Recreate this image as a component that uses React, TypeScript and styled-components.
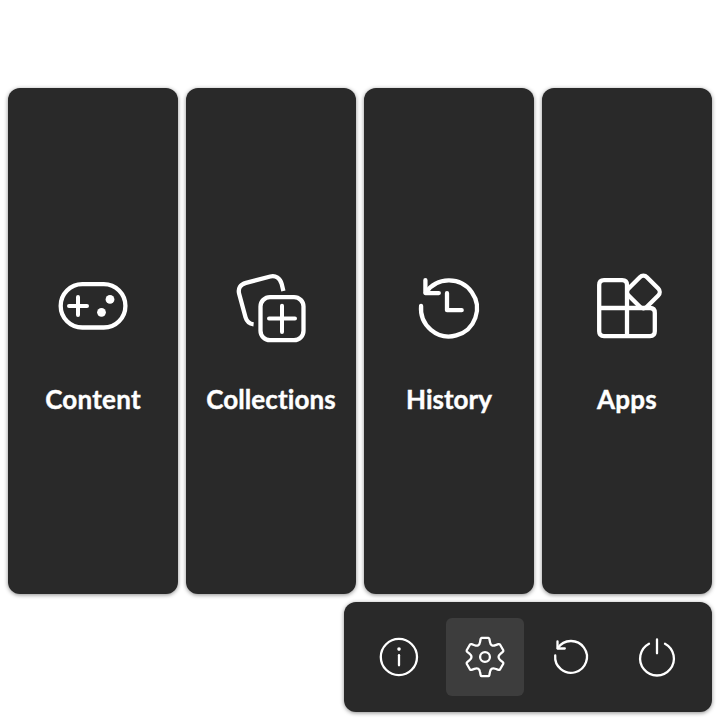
import React from "react";
import styled, { createGlobalStyle } from "styled-components";

const GlobalStyle = createGlobalStyle`
  * { box-sizing: border-box; }
  body { margin: 0; background: #fff; }
`;

const Page = styled.main`
  width: 720px;
  height: 720px;
  padding: 88px 8px 8px;
  display: flex;
  flex-direction: column;
  gap: 8px;
  overflow: hidden;
  font-family: Lato, "Noto Sans", sans-serif;
`;

const Tiles = styled.nav`
  height: 506px;
  display: grid;
  grid-template-columns: repeat(4, 170px);
  gap: 8px;
`;

const Tile = styled.button`
  display: flex;
  flex-direction: column;
  align-items: center;
  margin: 0;
  padding: 180px 0 0;
  border: 0;
  border-radius: 12px;
  background: #292929;
  color: #fff;
  font-family: inherit;
  box-shadow: 0 1px 4px rgba(0, 0, 0, 0.45);
`;

const TileIcon = styled.svg`
  display: block;
  width: 80px;
  height: 80px;
  flex: none;
  fill: none;
  stroke: #fff;
  stroke-width: 4.3;
  stroke-linecap: round;
  stroke-linejoin: round;
`;

const TileLabel = styled.span<{ $tracking: number }>`
  margin-top: 33px;
  font-size: 26px;
  letter-spacing: ${(p) => p.$tracking}px;
  line-height: 36px;
  font-weight: 700;
  font-variant-ligatures: none;
  -webkit-text-stroke: 0.4px #fff;
  white-space: nowrap;
`;

const Toolbar = styled.div`
  align-self: flex-end;
  width: 368px;
  height: 110px;
  padding: 16px;
  display: flex;
  justify-content: center;
  gap: 8px;
  border-radius: 12px;
  background: #292929;
  box-shadow: 0 1px 4px rgba(0, 0, 0, 0.45);
`;

const ToolButton = styled.button<{ $active?: boolean }>`
  width: 78px;
  height: 78px;
  flex: none;
  padding: 0;
  border: 0;
  border-radius: 6px;
  display: grid;
  place-items: center;
  background: ${(p) => (p.$active ? "#3d3d3d" : "transparent")};
`;

const ToolIcon = styled.svg`
  display: block;
  width: 48px;
  height: 48px;
  fill: none;
  stroke: #fff;
  stroke-width: 2.3;
  stroke-linecap: round;
  stroke-linejoin: round;
`;

// One sixth of the gear outline: tooth top, flank and the valley after it.
const toothPoints: [number, number][] = [
  [-4.4, -18], [-4.2, -19], [-3.3, -19.2], [3.3, -19.2], [4.2, -19], [4.4, -18],
  [5, -14.9], [5.8, -10], [10.6, -11.8],
];

const gearPath = (() => {
  const at = (i: number, k: number) => {
    const a = (k * Math.PI) / 3;
    const [x, y] = toothPoints[i];
    const rx = x * Math.cos(a) - y * Math.sin(a);
    const ry = x * Math.sin(a) + y * Math.cos(a);
    return `${rx.toFixed(2)} ${ry.toFixed(2)}`;
  };
  let d = "";
  for (let k = 0; k < 6; k++) {
    d += `${k ? "L" : "M"}${at(0, k)}Q${at(1, k)} ${at(2, k)}L${at(3, k)}Q${at(4, k)} ${at(5, k)}L${at(6, k)}Q${at(7, k)} ${at(8, k)}`;
  }
  return d + "Z";
})();

const tiles = [
  {
    label: "Content",
    tracking: 0.25,
    icon: (
      <>
        <rect x="7.7" y="16.2" width="64.7" height="43.3" rx="21.6" />
        <path strokeWidth="4" d="M16 38H34M25 29V47" />
        <circle cx="57" cy="31.4" r="4.4" fill="#fff" stroke="none" />
        <circle cx="48.5" cy="44.3" r="4.4" fill="#fff" stroke="none" />
      </>
    ),
  },
  {
    label: "Collections",
    tracking: 0.1,
    icon: (
      <>
        <rect x="29.5" y="29.1" width="43" height="43.1" rx="9.5" />
        <path strokeWidth="4" d="M38 50.5H64M51 37.7V64" />
        <path
          strokeLinecap="butt"
          d="M52.4 23L50.7 16C49.2 10 44.5 7.2 39.3 8.5L15 14.8C9.3 16.2 6.7 20.5 8.2 26L14.5 49.3C15.7 53.5 18.4 55.9 22.6 56.3"
        />
      </>
    ),
  },
  {
    label: "History",
    tracking: 0,
    icon: (
      <>
        <path d="M12.1 37.8A28 28 0 1 0 16.8 24.7" />
        <path d="M16.4 12.2V25.1H29.8" />
        <path d="M38 25.2V42.2H52.7" />
      </>
    ),
  },
  {
    label: "Apps",
    tracking: 0.25,
    icon: (
      <>
        <path d="M40 40V17Q40 12.2 35.2 12.2H17Q12.2 12.2 12.2 17V63.3Q12.2 68.1 17 68.1H63Q67.8 68.1 67.8 63.3V44.8Q67.8 40 63 40H12.2M40 40V68.1" />
        <rect x="43.4" y="11" width="26" height="26" rx="5" transform="rotate(45 56.4 24)" />
      </>
    ),
  },
];

const tools = [
  {
    label: "Information",
    icon: (
      <>
        <circle cx="23.9" cy="24" r="18.1" />
        <circle cx="24" cy="16.1" r="1.8" fill="#fff" stroke="none" />
        <path d="M24 22.2V32.3" />
      </>
    ),
  },
  {
    label: "Settings",
    active: true,
    icon: (
      <g transform="translate(24 24)">
        <path d={gearPath} />
        <circle r="4.9" />
      </g>
    ),
  },
  {
    label: "Reset",
    icon: (
      <>
        <path d="M8.2 22.5A15.9 15.9 0 1 0 10.8 15.1" />
        <path d="M10.5 8.4V15.5H17.8" />
      </>
    ),
  },
  {
    label: "Power",
    icon: <path d="M16 10.7A16.9 16.9 0 1 0 32 10.7M24 6.5V20.3" />,
  },
];

export default function App() {
  return (
    <>
      <GlobalStyle />
      <Page>
        <Tiles>
          {tiles.map((t) => (
            <Tile key={t.label}>
              <TileIcon viewBox="0 0 80 80">{t.icon}</TileIcon>
              <TileLabel $tracking={t.tracking}>{t.label}</TileLabel>
            </Tile>
          ))}
        </Tiles>
        <Toolbar>
          {tools.map((t) => (
            <ToolButton key={t.label} aria-label={t.label} $active={t.active}>
              <ToolIcon viewBox="0 0 48 48">{t.icon}</ToolIcon>
            </ToolButton>
          ))}
        </Toolbar>
      </Page>
    </>
  );
}
